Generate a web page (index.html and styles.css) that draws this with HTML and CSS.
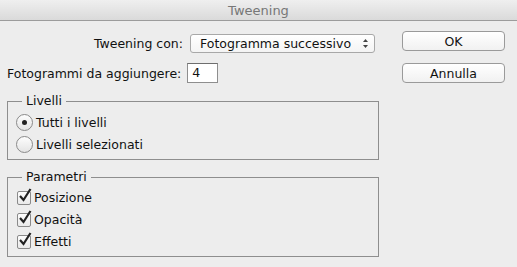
FILE: index.html
```html
<!DOCTYPE html>
<html lang="it">
<head>
    <meta charset="UTF-8">
    <title>Tweening</title>
    <link rel="stylesheet" href="styles.css">
</head>
<body>
    <div class="titlebar">Tweening</div>

    <div class="dialog">
        <div class="main">
            <div class="row row-right">
                <span>Tweening con:</span>
                <div class="select">
                    <span>Fotogramma successivo</span>
                    <svg class="arrows" width="7" height="11" viewBox="0 0 7 11">
                        <path d="M3.5 1 L6 4 L1 4 Z" fill="#444"/>
                        <path d="M3.5 10 L6 7 L1 7 Z" fill="#444"/>
                    </svg>
                </div>
            </div>
            <div class="row">
                <span>Fotogrammi da aggiungere:</span>
                <div class="input">4</div>
            </div>

            <fieldset class="group">
                <legend>Livelli</legend>
                <div class="option"><span class="radio checked"></span>Tutti i livelli</div>
                <div class="option"><span class="radio"></span>Livelli selezionati</div>
            </fieldset>

            <fieldset class="group group-params">
                <legend>Parametri</legend>
                <div class="option"><span class="check"><svg width="16" height="16" viewBox="0 0 16 16"><path d="M3 8 L6.5 12 L13.5 1" fill="none" stroke="#222" stroke-width="2.2"/></svg></span>Posizione</div>
                <div class="option"><span class="check"><svg width="16" height="16" viewBox="0 0 16 16"><path d="M3 8 L6.5 12 L13.5 1" fill="none" stroke="#222" stroke-width="2.2"/></svg></span>Opacità</div>
                <div class="option"><span class="check"><svg width="16" height="16" viewBox="0 0 16 16"><path d="M3 8 L6.5 12 L13.5 1" fill="none" stroke="#222" stroke-width="2.2"/></svg></span>Effetti</div>
            </fieldset>
        </div>

        <div class="actions">
            <button class="btn">OK</button>
            <button class="btn">Annulla</button>
        </div>
    </div>
</body>
</html>
```

FILE: styles.css
```css
/* Mac style dialog */
body {
    margin: 0;
    background-color: #ededed;
    font-family: "DejaVu Sans", sans-serif;
    font-size: 12.5px;
    color: #111;
    height: 267px;
    overflow: hidden;
}

.titlebar {
    height: 20px;
    line-height: 21px;
    text-align: center;
    color: #777;
    font-size: 13px;
    background: linear-gradient(#efefef, #dadada);
    border-bottom: 1px solid #9c9c9c;
}

.dialog {
    display: flex;
}

.main {
    width: 372px;
    margin-left: 7px;
    margin-top: 13px;
}

.row {
    display: flex;
    align-items: center;
    gap: 6px;
}

.row-right {
    justify-content: flex-end;
    padding-right: 4px;
    margin-bottom: 10px;
    gap: 7px;
}

.select {
    width: 174px;
    height: 17px;
    padding-left: 9px;
    display: flex;
    align-items: center;
    justify-content: space-between;
    border: 1px solid #a8a8a8;
    border-radius: 3px;
    background: linear-gradient(#ffffff, #f4f4f4);
}

.arrows {
    margin-right: 5px;
}

.input {
    width: 25px;
    height: 18px;
    line-height: 18px;
    padding-left: 4px;
    background-color: #fff;
    border: 1px solid #8e8e8e;
    border-top-color: #6e6e6e;
}

.group {
    margin: 10px 0 0;
    padding: 2px 8px 4px 8px;
    border: 1px solid #8e8e8e;
    min-inline-size: 0;
}

.group legend {
    margin-left: 6px;
    padding: 0 4px;
    line-height: 16px;
}

.group-params {
    margin-top: 9px;
    padding-top: 1px;
}

.option {
    display: flex;
    align-items: center;
    height: 22px;
}

.radio {
    width: 15px;
    height: 15px;
    margin-right: 3px;
    border: 1px solid #8a8a8a;
    border-radius: 50%;
    background: linear-gradient(#fdfdfd, #e4e4e4);
    display: flex;
    align-items: center;
    justify-content: center;
}

.radio.checked::after {
    content: "";
    width: 5px;
    height: 5px;
    border-radius: 50%;
    background-color: #222;
}

.check {
    position: relative;
    width: 12px;
    height: 12px;
    margin-left: 1px;
    margin-right: 3px;
    margin-top: 2px;
    border: 1px solid #8a8a8a;
    border-radius: 2px;
    background: linear-gradient(#fdfdfd, #e9e9e9);
}

.check svg {
    position: absolute;
    left: -1px;
    top: -4px;
}

.actions {
    display: flex;
    flex-direction: column;
    margin-left: 23px;
    margin-top: 10px;
    gap: 12px;
}

/* Basic styling for buttons */
.btn {
    width: 103px;
    height: 20px;
    padding: 0;
    font-family: "DejaVu Sans", sans-serif;
    font-size: 12.5px;
    color: #111;
    border: 1px solid #9a9a9a;
    border-radius: 4px;
    background: linear-gradient(#ffffff, #f1f1f1);
}
```
